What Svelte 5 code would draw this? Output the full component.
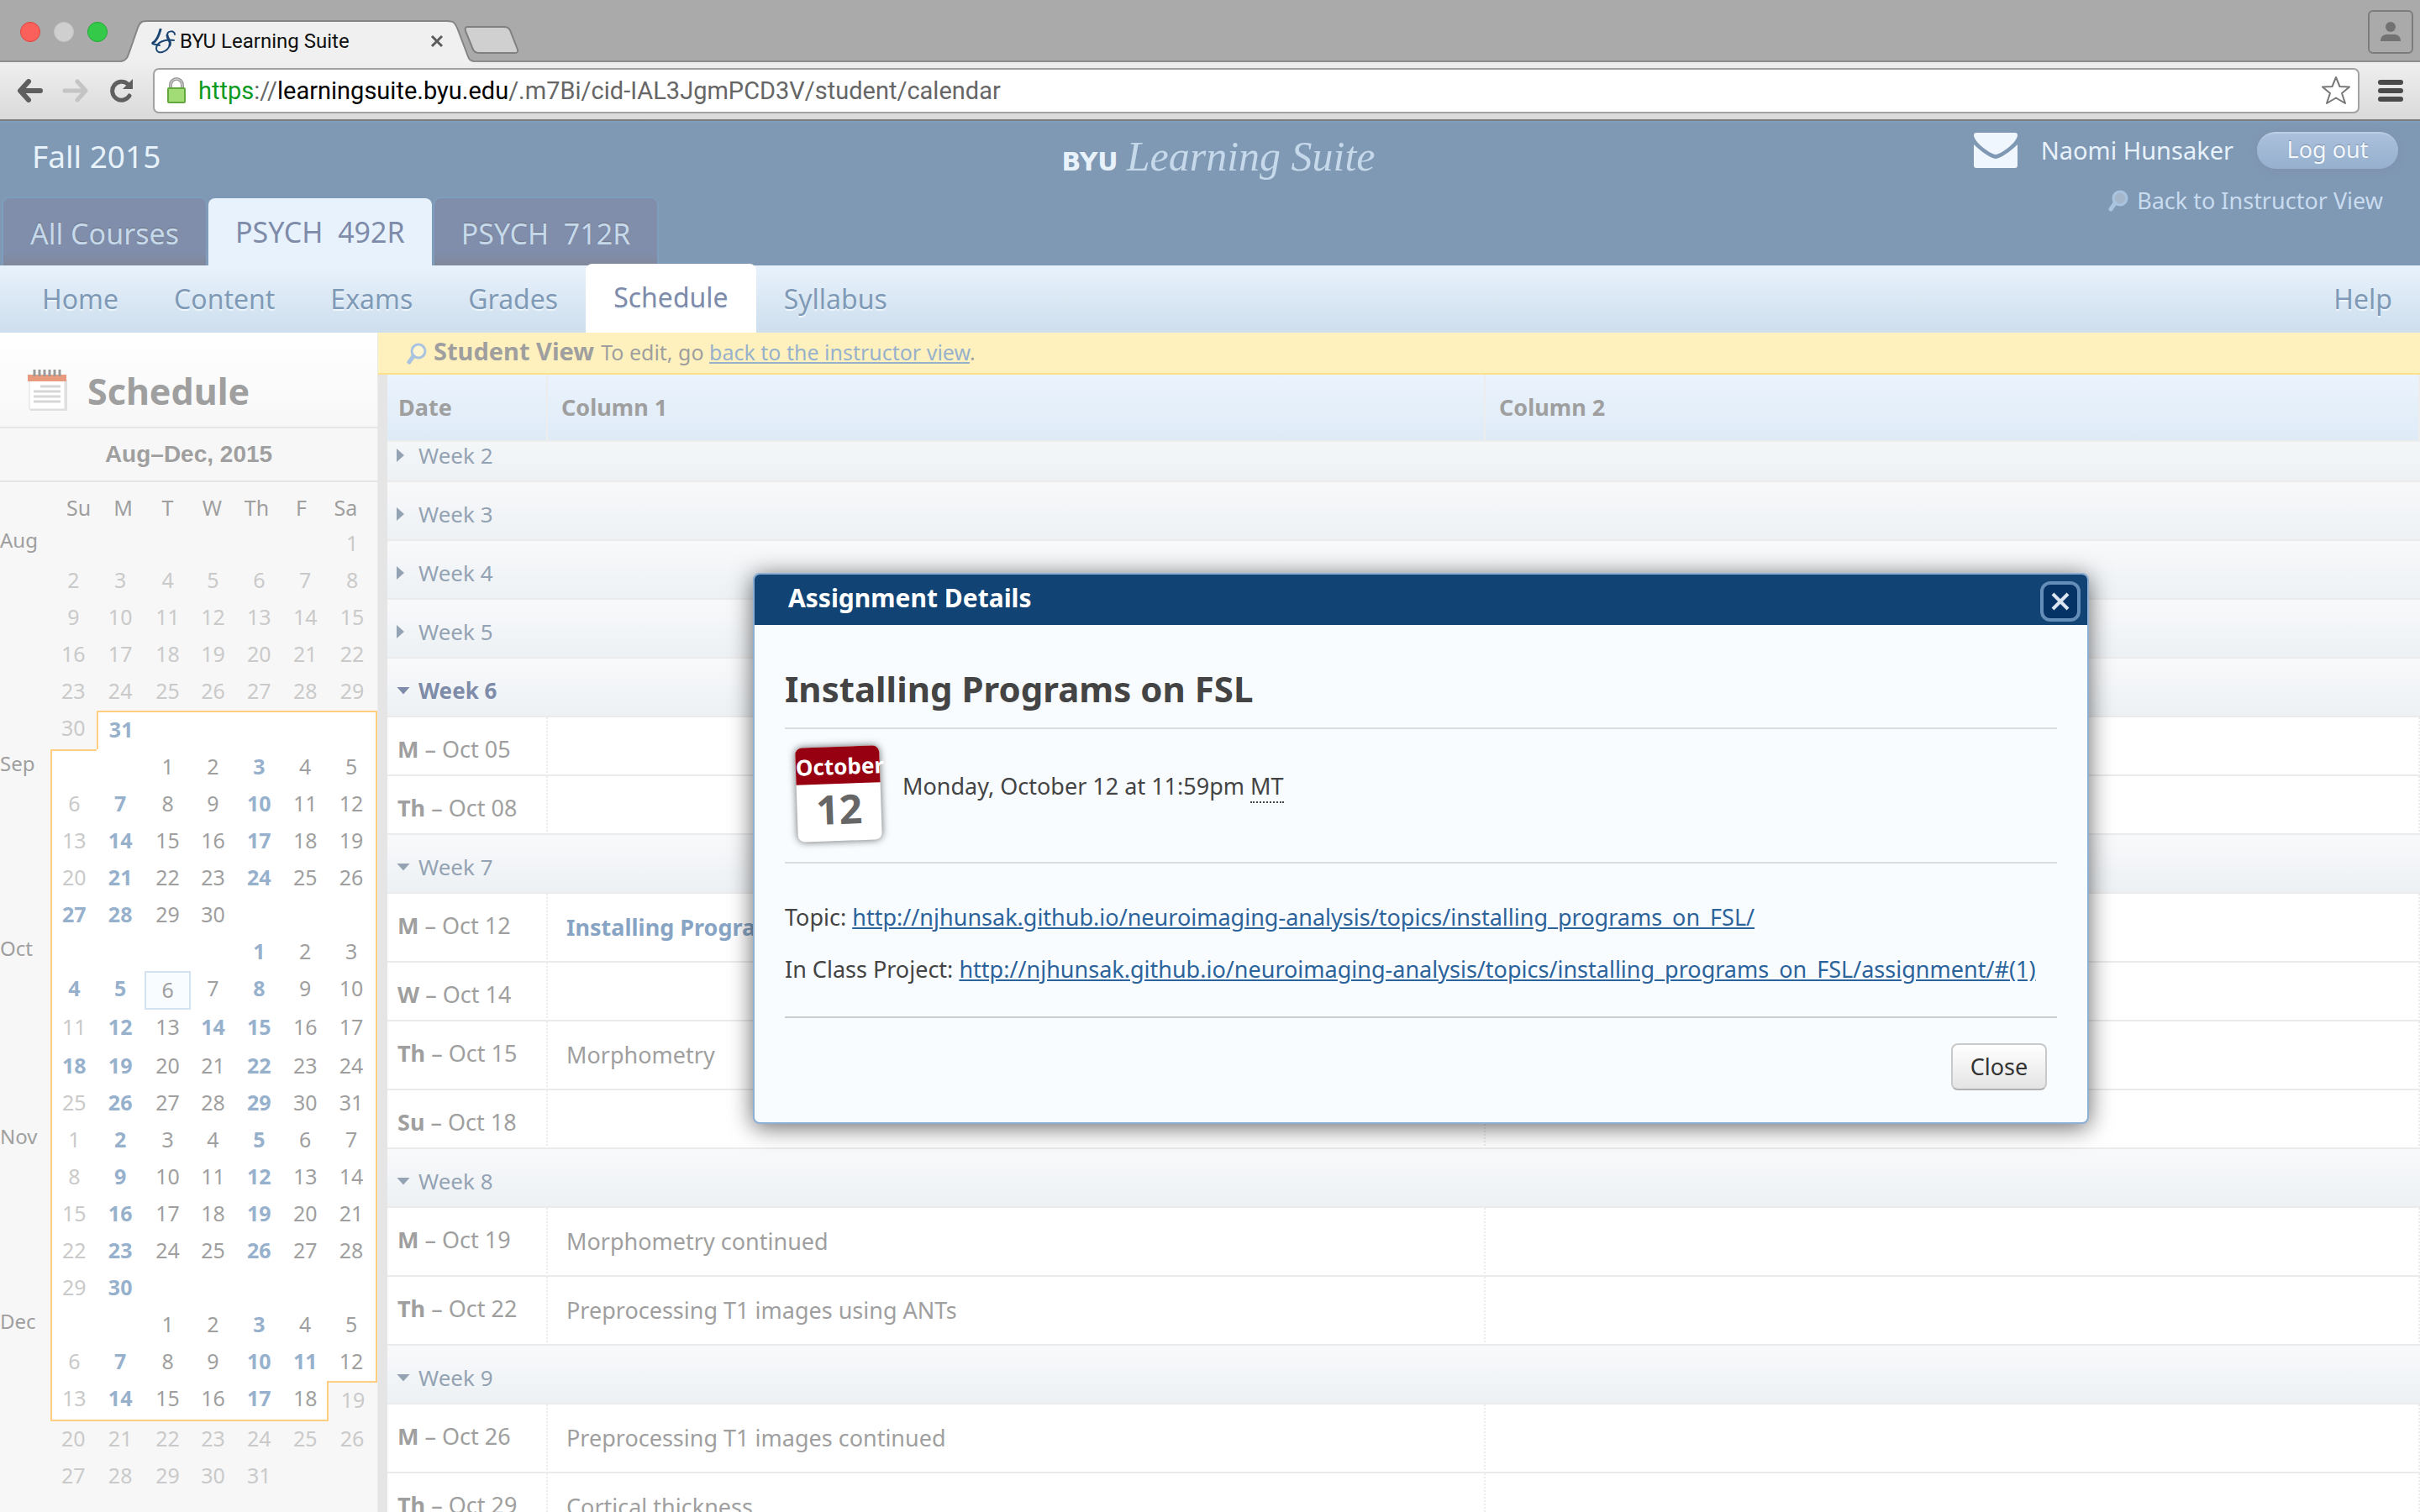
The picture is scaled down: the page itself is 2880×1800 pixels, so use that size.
<script>
  const courses = ['All Courses', 'PSYCH\u00a0 492R', 'PSYCH\u00a0 712R'];
  const nav = ['Home', 'Content', 'Exams', 'Grades', 'Schedule', 'Syllabus'];
  const weekdays = ['Su', 'M', 'T', 'W', 'Th', 'F', 'Sa'];

  // "*" marks a day with scheduled items, "~" a day without class.
  const weeks = [
    ['Aug', '      ~1'],
    ['', '~2 ~3 ~4 ~5 ~6 ~7 ~8'],
    ['', '~9 ~10 ~11 ~12 ~13 ~14 ~15'],
    ['', '~16 ~17 ~18 ~19 ~20 ~21 ~22'],
    ['', '~23 ~24 ~25 ~26 ~27 ~28 ~29'],
    ['', '~30 *31     ', 'first'],
    ['Sep', '  1 2 *3 4 5', 'term second'],
    ['', '~6 *7 8 9 *10 11 12', 'term'],
    ['', '~13 *14 15 16 *17 18 19', 'term'],
    ['', '~20 *21 22 23 *24 25 26', 'term'],
    ['', '*27 *28 29 30   ', 'term'],
    ['Oct', '    *1 2 3', 'term'],
    ['', '*4 *5 6 7 *8 9 10', 'term current'],
    ['', '~11 *12 13 *14 *15 16 17', 'term tall'],
    ['', '*18 *19 20 21 *22 23 24', 'term'],
    ['', '~25 *26 27 28 *29 30 31', 'term'],
    ['Nov', '~1 *2 3 4 *5 6 7', 'term'],
    ['', '~8 *9 10 11 *12 13 14', 'term'],
    ['', '~15 *16 17 18 *19 20 21', 'term'],
    ['', '~22 *23 24 25 *26 27 28', 'term'],
    ['', '~29 *30     ', 'term'],
    ['Dec', '  1 2 *3 4 5', 'term'],
    ['', '~6 *7 8 9 *10 *11 12', 'term'],
    ['', '~13 *14 15 16 *17 18 ~19', 'term last'],
    ['', '~20 ~21 ~22 ~23 ~24 ~25 ~26'],
    ['', '~27 ~28 ~29 ~30 ~31  ']
  ].map(([month, days, kind = '']) => ({ month, kind, days: days.split(' ') }));

  const rows = [
    { week: 'Week 2', cut: true },
    { week: 'Week 3' },
    { week: 'Week 4' },
    { week: 'Week 5' },
    { week: 'Week 6', open: true, now: true },
    { day: 'M', date: 'Oct 05' },
    { day: 'Th', date: 'Oct 08' },
    { week: 'Week 7', open: true },
    { day: 'M', date: 'Oct 12', text: 'Installing Programs on FSL', link: true },
    { day: 'W', date: 'Oct 14' },
    { day: 'Th', date: 'Oct 15', text: 'Morphometry' },
    { day: 'Su', date: 'Oct 18' },
    { week: 'Week 8', open: true },
    { day: 'M', date: 'Oct 19', text: 'Morphometry continued' },
    { day: 'Th', date: 'Oct 22', text: 'Preprocessing T1 images using ANTs' },
    { week: 'Week 9', open: true },
    { day: 'M', date: 'Oct 26', text: 'Preprocessing T1 images continued' },
    { day: 'Th', date: 'Oct 29', text: 'Cortical thickness' }
  ];
</script>

{#snippet magnifier()}
  <svg class="magnifier" viewBox="0 0 24 26" aria-hidden="true">
    <path d="M8 16 L3 23" stroke="currentColor" stroke-width="5" stroke-linecap="round" />
    <circle cx="14" cy="10" r="8" fill="#fff" fill-opacity=".3" stroke="currentColor" stroke-width="3" />
  </svg>
{/snippet}

<div class="window">
  <div class="tabstrip">
    <div class="lights"><i class="red"></i><i class="grey"></i><i class="green"></i></div>
    <div class="browser-tab">
      <svg class="tab-shape" viewBox="0 0 420 50" aria-hidden="true">
        <path d="M0 49.500 C8 49 8 42 11 35 L20 9 C23 1 26 1 32 1 H388 C396 1 397 3 400 9 L411 38 C414 46 414 49 420 49.500 V50 H0Z" fill="#f0f0f0" />
        <path d="M0 49 C8 48 8 42 11 35 L20 9 C23 1 26 1 32 1 H388 C396 1 397 3 400 9 L411 38 C414 46 414 48 420 49" fill="none" stroke="#858585" stroke-width="2" />
      </svg>
      <svg class="favicon" viewBox="0 0 30 30" fill="none" stroke="#1c4574" stroke-linecap="round" aria-hidden="true">
        <path d="M11 1 C9 9 7 14 2 17" stroke-width="3" />
        <path d="M2 17 C0 19 3 18 10 20" stroke-width="2" />
        <path d="M28 7 C28 2 19 2 19 8 C19 13 24 14 22 20 C19 28 7 32 6 24 C6 16 17 12 27 14" stroke-width="2" />
        <path d="M19 8 C19 13 24 14 22 20" stroke-width="3" />
      </svg>
      <span class="tab-title">BYU Learning Suite</span>
      <button class="bare tab-close" aria-label="Close tab">
        <svg viewBox="0 0 16 16"><path d="M2 2 L14 14 M14 2 L2 14" stroke="#5c5c5c" stroke-width="3" /></svg>
      </button>
    </div>
    <button class="bare new-tab" aria-label="New tab">
      <svg viewBox="0 0 66 34"><path d="M4 1 H48 Q53 1 55 5 L64 28 Q65 32 61 32 H18 Q13 32 11 28 L2 6 Q1 1 4 1Z" fill="#d0d0d0" stroke="#808080" stroke-width="2" /></svg>
    </button>
    <button class="bare profile" aria-label="Profile">
      <svg viewBox="0 0 24 26" fill="#727272"><circle cx="12" cy="7" r="6" /><path d="M0 24 C0 18 4 16 8 16 H16 C20 16 24 18 24 24Z" /></svg>
    </button>
  </div>

  <div class="toolbar">
    <button class="bare" aria-label="Back">
      <svg class="tool" viewBox="0 0 32 28" fill="none" stroke="#5f5f5f" stroke-width="6" stroke-linecap="round" stroke-linejoin="round"><path d="M14 3 L4 14 L14 25 M5 14 H28" /></svg>
    </button>
    <button class="bare" aria-label="Forward">
      <svg class="tool" viewBox="0 0 32 28" fill="none" stroke="#c4c4c4" stroke-width="5" stroke-linecap="round" stroke-linejoin="round"><path d="M18 3 L28 14 L18 25 M27 14 H3" /></svg>
    </button>
    <button class="bare" aria-label="Reload">
      <svg class="tool" viewBox="0 0 32 28"><path d="M26 20 A11 11 0 1 1 24 6" fill="none" stroke="#5f5f5f" stroke-width="5" stroke-linecap="round" /><path d="M30 0 V12 H18Z" fill="#5f5f5f" /></svg>
    </button>
    <div class="omnibox">
      <svg class="lock" viewBox="0 0 24 32" aria-hidden="true">
        <path d="M5 14 V9 A7 7 0 0 1 19 9 V14" fill="none" stroke="#999" stroke-width="4" />
        <path d="M5 14 V9 A7 7 0 0 1 19 9 V14" fill="none" stroke="#e4e4e4" stroke-width="1" />
        <rect x="2" y="13" width="20" height="17" rx="1" fill="#a2dc77" stroke="#63a83c" stroke-width="2" />
      </svg>
      <span class="url"><b class="scheme">https</b>://<b class="host">learningsuite.byu.edu</b>/.m7Bi/cid-IAL3JgmPCD3V/student/calendar</span>
      <button class="bare" aria-label="Bookmark">
        <svg class="star" viewBox="0 0 36 36"><path d="M18 2 L22.500 13 L34 13.500 L25 21 L29 33 L18 26.500 L7 33 L11 21 L2 13.500 L13.500 13Z" fill="#fff" stroke="#777" stroke-width="2" stroke-linejoin="round" /></svg>
      </button>
    </div>
    <button class="bare" aria-label="Menu">
      <svg class="menu" viewBox="0 0 30 28" fill="#4a4a4a"><rect width="30" height="6" rx="3" y="1" /><rect width="30" height="6" rx="3" y="11" /><rect width="30" height="6" rx="3" y="21" /></svg>
    </button>
  </div>

  <header class="masthead">
    <div class="term-side">
      <div class="term-name">Fall 2015</div>
      <nav class="courses">
        {#each courses as course, i}
          <a href="#course" class:active={i === 1}>{course}</a>
        {/each}
      </nav>
    </div>
    <div class="logo"><span class="byu">BYU</span><span class="script">Learning Suite</span></div>
    <div class="user-side">
      <div class="user">
        <svg class="mail" viewBox="0 0 52 42" fill="#f0f6fd" aria-hidden="true">
          <path d="M3 0 H49 Q52 0 52 3 C52 11 32 26 26 26 C20 26 0 11 0 3 Q0 0 3 0Z" />
          <path d="M0 14 C8 22 21 31 26 31 C31 31 44 22 52 14 V39 Q52 42 49 42 H3 Q0 42 0 39Z" />
        </svg>
        <span>Naomi Hunsaker</span>
        <button class="logout">Log out</button>
      </div>
      <a class="instructor" href="#instructor">{@render magnifier()}Back to Instructor View</a>
    </div>
  </header>

  <nav class="sections">
    {#each nav as item}
      <a href="#section" class:active={item === 'Schedule'}>{item}</a>
    {/each}
    <a class="help" href="#help">Help</a>
  </nav>

  <div class="page">
    <aside>
      <div class="side-title">
        <svg viewBox="0 0 50 50" aria-hidden="true">
          <rect x="4" y="12" width="44" height="37" fill="#e0e0e0" />
          <rect x="3" y="8" width="42" height="39" fill="#fff" stroke="#dedede" />
          <rect x="1" y="6" width="46" height="8" fill="#e79b7c" />
          <path d="M9 0 V8 M15 0 V8 M21 0 V8 M27 0 V8 M33 0 V8 M39 0 V8" stroke="#999" stroke-width="3" />
          <path d="M16 20 H40 M8 26 H40 M8 32 H40 M8 38 H40" stroke="#d6d6d6" stroke-width="3" />
        </svg>
        <h1>Schedule</h1>
      </div>
      <div class="range">Aug–Dec, 2015</div>
      <table class="calendar">
        <thead><tr>{#each weekdays as d}<th>{d}</th>{/each}</tr></thead>
        <tbody>
          {#each weeks as w}
            <tr class={w.kind}>
              <th>{w.month}</th>
              {#each w.days as d}
                <td class:off={d[0] === '~'} class:today={w.kind === 'term current' && d === '6'}>
                  {#if d[0] === '*'}<a href="#day">{d.slice(1)}</a>{:else}{d.replace('~', '')}{/if}
                </td>
              {/each}
            </tr>
          {/each}
        </tbody>
      </table>
    </aside>

    <main>
      <div class="notice">
        {@render magnifier()}<strong>Student View</strong>
        <span>To edit, go <a href="#instructor">back to the instructor view</a>.</span>
      </div>
      <table class="schedule">
        <colgroup><col class="c-date" /><col class="c-one" /><col /></colgroup>
        <thead><tr><th>Date</th><th>Column 1</th><th>Column 2</th></tr></thead>
        <tbody>
          {#each rows as r}
            {#if r.week}
              <tr class="week" class:cut={r.cut} class:now={r.now}>
                <td colspan="3"><button class="bare"><i class:open={r.open}></i>{r.week}</button></td>
              </tr>
            {:else}
              <tr class:tall={r.text}>
                <td><b>{r.day}</b> – {r.date}</td>
                <td class="topic">{#if r.link}<a href="#assignment">{r.text}</a>{:else}{r.text ?? ''}{/if}</td>
                <td></td>
              </tr>
            {/if}
          {/each}
        </tbody>
      </table>
    </main>
  </div>

  <div class="dialog" role="dialog" aria-labelledby="dialog-title">
    <div class="dialog-bar">
      <span id="dialog-title">Assignment Details</span>
      <button class="bare dismiss" aria-label="Close dialog">
        <svg viewBox="0 0 24 24"><path d="M3 3 L21 21 M21 3 L3 21" stroke="#dbe5f0" stroke-width="4" /></svg>
      </button>
    </div>
    <div class="dialog-body">
      <h2>Installing Programs on FSL</h2>
      <div class="due">
        <div class="leaf"><b>October</b><span>12</span></div>
        <p>Monday, October 12 at 11:59pm <abbr>MT</abbr></p>
      </div>
      <div class="details">
        <p>Topic: <a href="#topic">http://njhunsak.github.io/neuroimaging-analysis/topics/installing_programs_on_FSL/</a></p>
        <p>In Class Project: <a href="#project">http://njhunsak.github.io/neuroimaging-analysis/topics/installing_programs_on_FSL/assignment/#(1)</a></p>
      </div>
      <div class="actions"><button class="close">Close</button></div>
    </div>
  </div>
</div>

<style>
  :global(body) { background: #fff; }
  .window {
    position: relative;
    display: flex;
    flex-direction: column;
    height: 100vh;
    overflow: hidden;
    font-family: 'Noto Sans', 'Open Sans', sans-serif;
    font-size: 27px;
    line-height: 40px;
    color: #9f9f9f;
  }
  .window * { box-sizing: border-box; }
  svg { display: block; }
  a { color: inherit; text-decoration: none; }
  p, h1, h2 { margin: 0; }
  .bare { padding: 0; border: 0; background: none; color: inherit; font: inherit; }

  .tabstrip {
    display: flex;
    align-items: flex-end;
    flex: none;
    height: 74px;
    padding-right: 8px;
    background: #aaa;
    border-bottom: 2px solid #8e8e8e;
  }
  .lights { display: flex; gap: 16px; align-self: flex-start; padding: 26px 16px 0 24px; }
  .lights i { width: 24px; height: 24px; border-radius: 50%; border: 1px solid #e0443e; background: #fc605b; }
  .lights .grey { border-color: #c4c4c4; background: #cfcfcf; }
  .lights .green { border-color: #1eab32; background: #34c948; }
  .browser-tab {
    display: flex;
    align-items: center;
    position: relative;
    width: 420px;
    height: 50px;
    margin-bottom: -2px;
    padding: 0 36px;
    font: 24px/32px Roboto, sans-serif;
    color: #111;
  }
  .tab-shape { position: absolute; inset: 0; }
  .favicon, .tab-title, .tab-close { position: relative; }
  .favicon { width: 30px; height: 30px; margin-right: 4px; }
  .tab-title { flex: 1; white-space: nowrap; }
  .tab-close svg { width: 16px; height: 16px; }
  .new-tab { align-self: flex-start; margin: 31px 0 0 -12px; }
  .new-tab svg { width: 66px; height: 34px; }
  .profile {
    display: grid;
    place-items: center;
    align-self: flex-start;
    width: 54px;
    height: 52px;
    margin: 12px 0 0 auto;
    border: 2px solid #7c7c7c;
    border-radius: 6px;
  }
  .profile svg { width: 24px; height: 26px; }

  .toolbar {
    display: flex;
    align-items: center;
    gap: 22px;
    flex: none;
    height: 70px;
    padding: 0 20px;
    background: linear-gradient(#efefef, #dadada);
    border-bottom: 2px solid #7d7d7d;
  }
  .tool { width: 32px; height: 28px; }
  .omnibox {
    display: flex;
    align-items: center;
    flex: 1;
    height: 54px;
    padding: 0 8px 0 14px;
    background: #fff;
    border: 2px solid #a2a2a2;
    border-radius: 7px;
    font: 29px/36px Roboto, sans-serif;
    color: #666;
  }
  .lock { width: 24px; height: 32px; margin-right: 14px; }
  .url { flex: 1; }
  .url b { font-weight: 400; }
  .scheme { color: #0a9a1e; }
  .host { color: #000; }
  .star { width: 36px; height: 36px; }
  .menu { width: 30px; height: 28px; }

  .masthead {
    display: grid;
    grid-template-columns: 1fr auto 1fr;
    flex: none;
    height: 172px;
    padding-left: 4px;
    background: #7f98b3;
    border-top: 2px solid #7f9dbc;
    color: #e8f2fb;
  }
  .term-side { display: flex; flex-direction: column; justify-content: space-between; }
  .term-name { padding: 18px 0 0 34px; font-size: 37px; line-height: 44px; }
  .courses { display: flex; gap: 3px; }
  .courses a {
    height: 80px;
    padding: 0 32px;
    border-radius: 8px 8px 0 0;
    background: linear-gradient(#808eab 80%, #80889a);
    box-shadow: 0 0 0 2px #7f9dbc;
    font-size: 34px;
    line-height: 84px;
    white-space: nowrap;
    color: #c6d9eb;
    text-shadow: 0 -1px 1px #6d7480;
  }
  .courses .active { background: #e8f2fc; box-shadow: none; color: #7e8ba9; line-height: 80px; text-shadow: none; }
  .logo { display: flex; align-items: baseline; gap: 10px; padding: 8px 0 0 16px; line-height: 64px; white-space: nowrap; }
  .byu { font: bold 30px 'DejaVu Sans', sans-serif; }
  .script { font: italic 50px/64px 'Liberation Serif', serif; color: #c6d9eb; }
  .user-side { display: flex; flex-direction: column; align-items: flex-end; padding: 9px 26px 0 0; }
  .user { display: flex; align-items: center; gap: 28px; height: 48px; font-size: 29px; }
  .mail { width: 52px; height: 42px; }
  .logout {
    height: 44px;
    width: 168px;
    padding: 0 0 4px;
    border: 0;
    border-top: 2px solid #bccde4;
    border-radius: 22px;
    background: linear-gradient(#abc0dc, #95b0cd);
    box-shadow: 0 2px 8px #8090ae;
    color: #f2f8fe;
    font: 27px/38px 'Noto Sans', sans-serif;
    text-shadow: 0 -1px 1px #7d8ca5;
  }
  .instructor { display: flex; align-items: center; gap: 10px; margin: 16px 18px 0 0; font-size: 27px; line-height: 40px; color: #c9dcf0; }
  .magnifier { width: 24px; height: 26px; fill: none; color: #a9c4e0; }

  .sections {
    display: flex;
    flex: none;
    height: 80px;
    padding-left: 17px;
    background: linear-gradient(#e8f2fc, #cddeed);
    color: #7f9ab6;
    font-size: 32px;
    line-height: 80px;
    text-shadow: 0 2px 0 #eff6fc;
  }
  .sections a { padding: 0 33px; }
  .sections .active { height: 82px; margin-top: -2px; border-radius: 8px 8px 0 0; background: #fff; color: #7e8ba9; }
  .sections .help { margin-left: auto; }

  .page { display: flex; flex: 1; min-height: 0; }
  aside { flex: none; width: 450px; background: #f7f7f7; border-right: 1px solid #ebebeb; }
  .side-title {
    display: flex;
    gap: 22px;
    height: 114px;
    padding: 42px 0 0 32px;
    background: linear-gradient(#fff, #f7f7f7);
    border-bottom: 2px solid #e5e5e5;
  }
  .side-title svg { width: 50px; height: 50px; margin-top: 2px; }
  h1 { font-size: 43px; line-height: 56px; }
  .range {
    height: 64px;
    border-bottom: 2px solid #e5e5e5;
    font: bold 28px/62px 'Liberation Sans', sans-serif;
    text-align: center;
  }
  .calendar { display: block; font-size: 25px; text-align: center; }
  .calendar thead, .calendar tbody { display: block; }
  .calendar th, .calendar td { display: block; padding: 0; font-weight: 400; }
  .calendar tr { display: grid; grid-template-columns: 60fr 55fr 57fr 56fr 52fr 58fr 52fr 60fr; height: 44px; }
  .calendar thead tr { grid-template-columns: repeat(7, 53px); height: 52px; padding: 10px 0 0 67px; }
  .calendar tbody th { font-size: 24px; text-align: left; line-height: 34px; white-space: nowrap; }
  .calendar td a { color: #97b1cd; font-weight: 700; }
  .calendar .off { color: #cacaca; }
  .calendar .first { height: 46px; }
  .calendar .first td:nth-child(n + 3) { background: #fff; border-top: 2px solid #ffce80; }
  .calendar .first td:nth-child(3) { border-left: 2px solid #ffce80; }
  .calendar .first td:last-child { border-right: 2px solid #ffce80; }
  .calendar .term td { background: #fff; }
  .calendar .term td:nth-child(2) { border-left: 2px solid #ffce80; }
  .calendar .term td:last-child { border-right: 2px solid #ffce80; }
  .calendar .second td:nth-child(2) { border-top: 2px solid #ffce80; }
  .calendar .current, .calendar .tall { height: 46px; }
  .calendar .term .today { border: 2px solid #d3e3f1; background: #f8fcff; }
  .calendar .last { height: 48px; }
  .calendar .last td { border-bottom: 2px solid #ffce80; }
  .calendar .last td:last-child { background: #f7f7f7; border: solid #ffce80; border-width: 2px 0 0 2px; }

  main { display: flex; flex-direction: column; flex: 1; min-width: 0; overflow: hidden; background: #fff; }
  .notice {
    display: flex;
    align-items: baseline;
    gap: 8px;
    flex: none;
    height: 50px;
    padding: 2px 34px 0;
    background: #fff1bd;
    border-bottom: 2px solid #ffdf88;
    font-size: 25px;
  }
  .notice .magnifier { align-self: center; }
  .notice strong { font-size: 29px; }
  .notice a { color: #97b1cd; text-decoration: underline; }
  .schedule { width: 100%; table-layout: fixed; border-collapse: separate; border-spacing: 0; border-left: 11px solid #e5e5e5; }
  .c-date { width: 191px; }
  .c-one { width: 1116px; }
  .schedule thead th {
    height: 80px;
    padding: 0 0 0 13px;
    background: linear-gradient(#ebf3fd, #deebf7);
    border: solid #ededed;
    border-width: 0 2px 2px 0;
    font-weight: 700;
    text-align: left;
  }
  .schedule thead th + th { padding-left: 16px; }
  .schedule td {
    height: 70px;
    padding: 18px 0 0 12px;
    border-bottom: 2px solid #ebebeb;
    border-right: 2px dotted #ececec;
    vertical-align: top;
    white-space: nowrap;
  }
  .schedule .tall td { height: 82px; }
  .schedule .topic { padding: 20px 0 0 22px; }
  .schedule .topic a { color: #87a4c4; font-weight: 700; }
  .schedule .week td { padding-left: 11px; background: linear-gradient(#f8f9fb, #edf1f4); border-right: 0; color: #94a3b3; font-size: 26px; }
  .schedule .cut td { height: 48px; padding-top: 0; background: linear-gradient(#f4f7f8, #edf1f4); line-height: 32px; }
  .schedule .now td { color: #7e8ba9; font-weight: 700; }
  .week button { display: flex; align-items: center; }
  .week i { width: 26px; }
  .week i::before { content: ''; display: block; width: 9px; height: 16px; background: currentColor; clip-path: polygon(0 0, 100% 50%, 0 100%); }
  .week i.open::before { width: 16px; height: 9px; clip-path: polygon(0 0, 100% 0, 50% 100%); }

  .dialog {
    position: absolute;
    top: 682px;
    left: 896px;
    width: 1590px;
    border: 2px solid #8cafd6;
    border-radius: 8px;
    background: #f8fcff;
    box-shadow: 0 4px 28px rgba(0, 0, 0, .6);
    color: #444;
    overflow: hidden;
  }
  .dialog-bar {
    display: flex;
    justify-content: space-between;
    height: 60px;
    padding: 8px 8px 0 40px;
    background: #114475;
    color: #fff;
    font-size: 30px;
    font-weight: 700;
  }
  .dismiss { display: grid; place-items: center; width: 48px; height: 48px; border: 4px solid #648db8; border-radius: 12px; background: #063366; }
  .dismiss svg { width: 24px; height: 24px; }
  .dialog-body { padding: 48px 36px 38px; }
  h2 { padding-bottom: 18px; border-bottom: 2px solid #dcdcdc; font-size: 42px; line-height: 56px; }
  .due { display: flex; align-items: center; gap: 26px; height: 160px; padding: 0 0 4px 14px; border-bottom: 2px solid #dcdcdc; }
  .due p { padding-bottom: 18px; }
  abbr { border-bottom: 2px dotted #444; text-decoration: none; }
  .leaf {
    width: 100px;
    height: 112px;
    border-radius: 8px;
    background: #fff;
    box-shadow: 0 0 10px rgba(0, 0, 0, .6);
    transform: rotate(-2deg);
    text-align: center;
  }
  .leaf b { display: block; height: 44px; border-radius: 8px 8px 0 0; background: #970010; color: #fff; font-size: 26px; line-height: 46px; text-align: left; }
  .leaf span { font-size: 48px; line-height: 60px; font-weight: 700; color: #666; }
  .details { padding: 44px 0 36px; border-bottom: 2px solid #ccc; }
  .details p { white-space: nowrap; }
  .details p + p { margin-top: 22px; }
  .details a { color: #2c639b; text-decoration: underline; }
  .actions { display: flex; justify-content: flex-end; padding: 30px 12px 0 0; }
  .close {
    width: 114px;
    height: 56px;
    padding: 0;
    border: 2px solid #c9c9c9;
    border-bottom-color: #b0b0b0;
    border-radius: 8px;
    background: linear-gradient(#fff, #e4e4e4);
    color: #333;
    font: 27px/40px 'Noto Sans', sans-serif;
  }
</style>
